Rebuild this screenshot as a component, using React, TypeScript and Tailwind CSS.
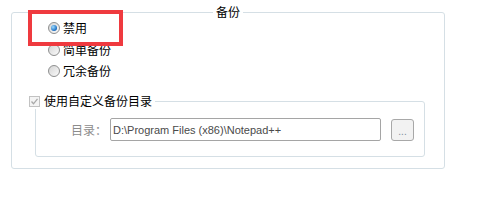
import React from 'react';

function Radio({ checked, label }: { checked?: boolean; label: string }) {
  return (
    <label className="flex h-[16px] items-center">
      <span className="flex h-[12px] w-[12px] items-center justify-center rounded-full border border-[#8e8f8f] bg-gradient-to-br from-[#d4d4d4] to-[#fbfbfb]">
        {checked && (
          <span className="h-[6px] w-[6px] rounded-full bg-[radial-gradient(circle_at_35%_35%,#9fdcff,#1a6cc0_70%,#0d4f95)]" />
        )}
      </span>
      <span className="ml-[3px] text-black">{label}</span>
    </label>
  );
}

export default function App() {
  return (
    <div className="relative h-[208px] w-[481px] bg-white pl-[11px] pt-[4px] font-['Noto_Sans_CJK_SC',sans-serif] text-[12px] leading-[16px] text-black">
      <fieldset className="h-[165px] w-[434px] rounded-[3px] border border-[#d5dfe5]">
        <legend className="mx-auto px-[3px]">备份</legend>

        {/* backup mode */}
        <div className="flex flex-col pl-[36px]">
          <Radio checked label="禁用" />
          <div className="mt-[6px]">
            <Radio label="简单备份" />
          </div>
          <div className="mt-[5px]">
            <Radio label="冗余备份" />
          </div>
        </div>

        {/* custom dir group */}
        <fieldset className="ml-[23px] mt-[14px] h-[64px] w-[390px] rounded-[3px] border border-[#d5dfe5]">
          <legend className="-ml-[7px] flex items-center pr-[3px]">
            <span className="flex h-[11px] w-[11px] items-center justify-center border border-[#c2c2c2] bg-[#f4f4f4]">
              <svg width="9" height="9" viewBox="0 0 9 9">
                <path d="M1.5 4.5 L3.5 6.8 L7.5 1.8" fill="none" stroke="#a9a9a9" strokeWidth="1.3" />
              </svg>
            </span>
            <span className="ml-[4px]">使用自定义备份目录</span>
          </legend>
          <div className="mt-[9px] flex items-start pl-[35px]">
            <span className="mt-[4px] w-[39px] text-[#8c8c8c]">目录：</span>
            <div className="flex h-[23px] w-[271px] items-center rounded-[2px] border border-[#a5a5a5] pl-[2px] font-['Liberation_Sans',sans-serif] text-[11px] text-[#4a4a4a]">
              D:\Program Files (x86)\Notepad++
            </div>
            <button className="ml-[10px] mt-[1px] flex h-[22px] w-[23px] items-end justify-center rounded-[3px] border border-[#a8a8a8] bg-[#f2f2f2] pb-[3px] font-['Liberation_Sans',sans-serif] text-[10px] leading-[10px] text-[#7d8c9c]">
              ...
            </button>
          </div>
        </fieldset>
      </fieldset>

      {/* highlight frame */}
      <div className="absolute left-[28px] top-[10px] h-[36px] w-[95px] border-[4px] border-[#ef3a3f]" />
    </div>
  );
}
